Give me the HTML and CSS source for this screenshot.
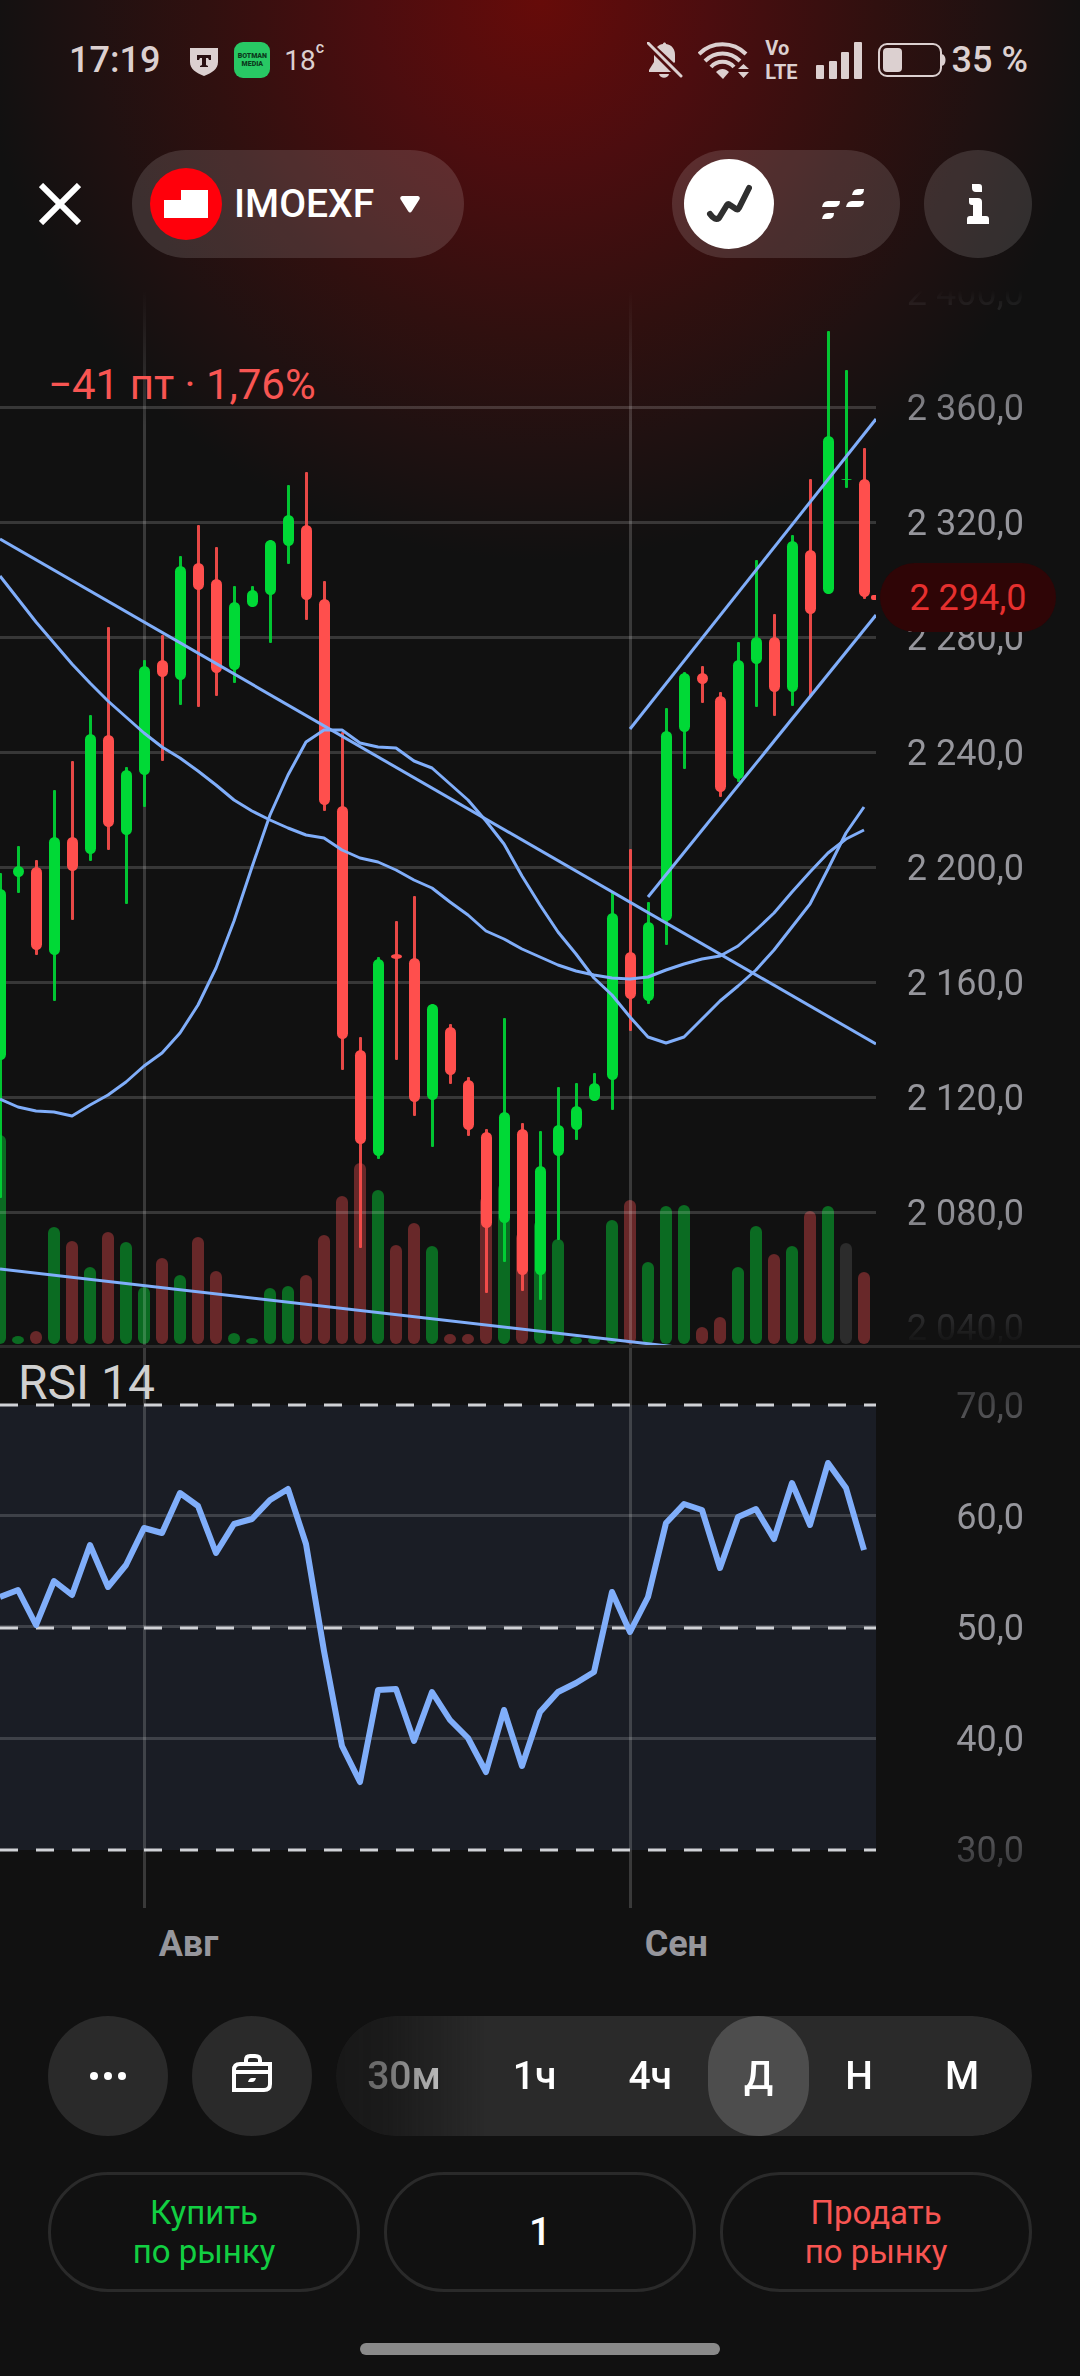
FILE: index.html
```html
<!DOCTYPE html>
<html lang="ru">
<head>
  <meta charset="UTF-8">
  <meta name="viewport" content="width=device-width, initial-scale=1">
  <title>IMOEXF</title>
  <link rel="stylesheet" href="styles.css">
</head>
<body>

<div class="statusbar">
  <span class="time">17:19</span>
  <svg class="shield" width="28" height="28" viewBox="0 0 28 28">
    <path fill="#dcd0d0" d="M0 0h28v14c0 7-6 11-14 14C6 25 0 21 0 14z"/>
    <path fill="#2a1012" d="M7 7h14v5h-2l-1-2h-2v7l2 1v1h-8v-1l2-1v-7h-2l-1 2H7z"/>
  </svg>
  <span class="app-badge"><span>BOTMAN</span><span>MEDIA</span></span>
  <span class="temp">18<sup>c</sup></span>

  <div class="status-icons">
    <svg width="36" height="36" viewBox="0 0 36 36" fill="#dcd0d0">
      <path d="M10 5c2-2 4-3 6-3 0-2 3-2 3 0 6 1 9 5 9 11v7l-1 1zM7 13v7l-5 8v2h22z"/>
      <path d="M12 32h10c-1 5-9 5-10 0z"/>
      <path d="M1 1l33 33" stroke="#dcd0d0" stroke-width="3" stroke-linecap="round"/>
    </svg>
    <svg class="wifi" width="51" height="37" viewBox="0 0 51 37" fill="none" stroke="#dcd0d0" stroke-width="4">
      <path d="M1 12c13-13 34-13 47 0M7 19c10-10 25-10 35 0M13 25c6-7 17-7 23 0"/>
      <path d="M18 30c4-4 9-4 13 0l-6 7z" fill="#dcd0d0" stroke="none"/>
      <path d="M40 27h11l-5.500-5zM40 30h11l-5.500 6z" fill="#dcd0d0" stroke="none"/>
    </svg>
    <span class="volte"><span>Vo</span><span>LTE</span></span>
    <svg class="signal" width="46" height="37" viewBox="0 0 46 37" fill="#dcd0d0">
      <rect x="0" y="23" width="8" height="14" rx="1"/>
      <rect x="13" y="19" width="8" height="18" rx="1"/>
      <rect x="25" y="10" width="8" height="27" rx="1"/>
      <rect x="38" y="0" width="8" height="37" rx="1"/>
    </svg>
    <svg class="battery" width="68" height="36" viewBox="0 0 68 36">
      <rect x="1" y="2" width="62" height="32" rx="8" fill="none" stroke="#dcd0d0" stroke-width="2"/>
      <rect x="5" y="6" width="19" height="24" rx="4" fill="#dcd0d0"/>
      <path d="M63 12c6 0 6 12 0 12z" fill="#dcd0d0"/>
    </svg>
    <span class="percent">35 %</span>
  </div>
</div>

<header>
  <button class="close" aria-label="Закрыть">
    <svg width="42" height="42" viewBox="0 0 42 42" stroke="#fff" stroke-width="6"><path d="M2 2l38 38M40 2L2 40"/></svg>
  </button>
  <button class="ticker">
    <svg width="72" height="72" viewBox="0 0 72 72">
      <circle cx="36" cy="36" r="36" fill="#ff000b"/>
      <path d="M14 32h17V22h27v28H14z" fill="#fff"/>
    </svg>
    <span>IMOEXF</span>
    <svg class="caret" width="20" height="17" viewBox="0 0 20 17"><path fill="#fff" d="M2 0h16q3 1 1 4l-7 11q-2 3-4 0L1 4q-2-3 1-4z"/></svg>
  </button>

  <div class="view-toggle">
    <button class="active" aria-label="График">
      <svg width="46" height="40" viewBox="0 0 46 40" fill="none" stroke="#2f2f2f" stroke-width="6" stroke-linejoin="round" stroke-linecap="round"><path d="M4 30q5 7 9 4l8-13q1-2 3 0l6 4q2 1 3-1L43 4"/></svg>
    </button>
    <button aria-label="Стакан">
      <svg width="42" height="31" viewBox="0 0 42 31" fill="#fff">
        <path d="M30 6q1-6 6-6h6q0 6-6 6zM24 18q1-6 6-6h12q0 6-6 6zM0 18q1-6 6-6h12q0 6-6 6zM0 30q1-6 6-6h6q0 6-6 6z"/>
      </svg>
    </button>
  </div>
  <button class="info" aria-label="Информация">
    <svg width="22" height="40" viewBox="0 0 22 40" fill="#fff">
      <path d="M5 0h7q3 0 3 3v5H9q-4 0-4-4zM2 14h9q4 0 4 4v14h4q3 0 3 3v5H0v-5q0-3 3-3h3V21H5q-3 0-3-3z"/>
    </svg>
  </button>
</header>

<main>
  <section class="pane price-pane">
    <div class="plot">
      <p class="change">−41 пт · 1,76%</p>
      <svg id="price" viewBox="0 290 876 1055" preserveAspectRatio="xMaxYMid slice"></svg>
    </div>
    <div class="axis">
      <ul>
        <li>2 400,0</li>
        <li>2 360,0</li>
        <li>2 320,0</li>
        <li>2 280,0</li>
        <li>2 240,0</li>
        <li>2 200,0</li>
        <li>2 160,0</li>
        <li>2 120,0</li>
        <li>2 080,0</li>
        <li>2 040,0</li>
      </ul>
    </div>
    <span class="last-price">2 294,0</span>
  </section>

  <section class="pane rsi-pane">
    <div class="plot">
      <p class="rsi-title">RSI 14</p>
      <svg id="rsi" viewBox="0 1348 876 560" preserveAspectRatio="xMaxYMid slice"></svg>
    </div>
    <div class="axis">
      <ul>
        <li>70,0</li>
        <li>60,0</li>
        <li>50,0</li>
        <li>40,0</li>
        <li>30,0</li>
      </ul>
    </div>
  </section>

  <div class="months">
    <span></span><span>Авг</span><span>Сен</span>
  </div>
</main>

<div class="toolbar">
  <button class="round" aria-label="Ещё">
    <svg width="36" height="8" viewBox="0 0 36 8" fill="#fff"><circle cx="4" cy="4" r="4"/><circle cx="18" cy="4" r="4"/><circle cx="32" cy="4" r="4"/></svg>
  </button>
  <button class="round" aria-label="Портфель">
    <svg class="case" width="40" height="38" viewBox="0 0 40 38" fill="none" stroke="#fff" stroke-width="4">
      <path d="M2 36V16q0-6 6-6h30v20q0 6-6 6zM14 10V6q0-4 4-4h5q5 0 5 4v4M2 18h36"/>
      <path d="M16 28q1-4 4-4h4q-1 4-4 4z" fill="#fff" stroke="none"/>
    </svg>
  </button>
  <div class="periods">
    <button>30м</button>
    <button>1ч</button>
    <button>4ч</button>
    <button class="active">Д</button>
    <button>Н</button>
    <button>М</button>
  </div>
</div>

<form class="order">
  <button type="button" class="buy">Купить<br>по рынку</button>
  <input type="text" value="1" aria-label="Количество">
  <button type="button" class="sell">Продать<br>по рынку</button>
</form>

<div class="home-bar"></div>

<script>
  const STEP = 18;
  const BOTTOM = 1344;

  // цвет, максимум, верх тела, низ тела, минимум, верх объёма
  const candles = [
    ['g',873,889,1060,1198,1135], ['g',846,866,877,893,1336], ['r',860,867,950,955,1331],
    ['g',790,837,955,1001,1227], ['r',761,837,871,920,1241], ['g',715,734,854,861,1267],
    ['r',627,735,827,850,1232], ['g',767,770,835,904,1242], ['g',660,666,775,807,1287],
    ['r',635,660,677,761,1258], ['g',556,566,680,705,1275], ['r',525,563,590,707,1237],
    ['r',547,579,673,696,1271], ['g',586,602,670,683,1333], ['g',586,590,607,607,1338],
    ['g',540,540,595,643,1288], ['g',485,515,546,564,1286], ['r',472,525,600,620,1275],
    ['r',581,599,805,811,1235], ['r',732,806,1039,1070,1196], ['r',1037,1050,1144,1248,1163],
    ['g',957,959,1156,1159,1190], ['r',921,954,959,1060,1245], ['r',896,958,1102,1116,1223],
    ['g',1004,1004,1100,1147,1246], ['r',1024,1027,1075,1084,1334], ['r',1077,1080,1130,1136,1334],
    ['r',1129,1132,1228,1293,1196], ['g',1018,1112,1223,1262,1183], ['r',1123,1129,1275,1291,1232],
    ['g',1131,1166,1275,1300,1220], ['g',1087,1125,1156,1240,1239], ['g',1083,1106,1130,1140,1337],
    ['g',1073,1083,1101,1101,1337], ['g',891,913,1080,1110,1220], ['r',849,952,999,1031,1200],
    ['g',902,922,1001,1004,1262], ['g',708,731,921,945,1206], ['g',672,673,732,769,1205],
    ['r',666,673,684,703,1327], ['r',692,696,792,797,1317], ['g',642,660,779,782,1267],
    ['g',560,637,664,707,1226], ['r',614,637,692,716,1254], ['g',535,541,692,706,1246],
    ['r',479,550,614,697,1211], ['g',331,436,594,594,1206], ['n',370,479,480,488,1243],
    ['r',448,479,597,599,1272]
  ];

  const maLong = [576,599,622,643,664,683,701,717,733,747,758,771,785,800,811,820,828,835,838,850,
    858,862,870,880,888,902,915,931,939,949,957,965,971,975,978,979,977,970,964,959,956,946,930,
    913,892,872,853,839,830];
  const maShort = [1099,1107,1111,1112,1116,1105,1095,1082,1066,1053,1033,1005,968,921,867,815,775,
    742,730,730,743,747,748,761,768,784,800,821,844,876,905,932,954,978,995,1017,1037,1043,1037,
    1019,1001,986,970,950,927,904,869,833,807];
  const rsi = [1597,1590,1625,1581,1595,1545,1587,1565,1528,1533,1493,1506,1553,1524,1519,1500,1489,
    1544,1651,1746,1782,1690,1689,1741,1692,1720,1738,1772,1710,1766,1712,1692,1683,1672,1592,1632,
    1597,1523,1504,1510,1568,1517,1509,1539,1483,1525,1463,1488,1550];

  const body = { g:'#00d936', r:'#ff4f4d', n:'#00d936' };
  const volume = { g:'#0b6b22', r:'#682829', n:'#2c2c2c' };

  function rect(x, y, w, h, fill, extra='') {
    return `<rect x="${x}" y="${y}" width="${w}" height="${h}" fill="${fill}" ${extra}/>`;
  }

  function line(values, width) {
    const points = values.map((y,i)=>`${i*STEP},${y}`).join(' ');
    return `<polyline points="${points}" fill="none" stroke="#80aefa" stroke-width="${width}" stroke-linejoin="round"/>`;
  }

  function trend(x1, y1, x2, y2) {
    return `<line x1="${x1}" y1="${y1}" x2="${x2}" y2="${y2}" stroke="#80aefa" stroke-width="3"/>`;
  }

  function drawPrice() {
    let out = `<defs><linearGradient id="fade" x1="0" y1="0" x2="0" y2="1">
      <stop offset="0" stop-color="#fff" stop-opacity="0"/>
      <stop offset="0.13" stop-color="#fff" stop-opacity="0.17"/></linearGradient></defs>`;

    candles.forEach((c,i)=>{
      out += rect(i*STEP-6, c[5], 12, BOTTOM-c[5], volume[c[0]], 'rx="6"');
    });

    for(let y=406; y<1300; y+=115) out += rect(0, y, 876, 3, '#fff', 'opacity=".16"');
    out += rect(143, 290, 3, 1055, 'url(#fade)') + rect(629, 290, 3, 1055, 'url(#fade)');

    candles.forEach((c,i)=>{
      const [color, high, top, bottom, low] = c;
      out += rect(i*STEP-1, high, 3, low-high, body[color], 'rx="1" opacity=".9"');
      out += rect(i*STEP-5, top, 11, bottom-top, body[color], 'rx="5.5"');
    });
    out += rect(871, 595, 12, 5, '#ff4f4d', 'rx="2"');

    out += trend(0, 539, 876, 1044) + trend(0, 1269, 876, 1370);
    out += trend(630, 729, 876, 419) + trend(648, 897, 876, 615);
    out += line(maLong, 3) + line(maShort, 3);
    document.getElementById('price').innerHTML = out;
  }

  function drawRsi() {
    let out = rect(0, 1405, 876, 445, '#1a1d25');
    [1514, 1625, 1737].forEach(y=>out += rect(0, y, 876, 3, '#fff', 'opacity=".16"'));
    out += rect(143, 1348, 3, 560, '#fff', 'opacity=".17"') + rect(629, 1348, 3, 560, '#fff', 'opacity=".17"');
    [1405, 1628, 1850].forEach(y=>{
      out += `<line x1="0" y1="${y}" x2="876" y2="${y}" stroke="#d0d2d6" stroke-width="3" stroke-dasharray="18"/>`;
    });
    out += line(rsi, 6);
    document.getElementById('rsi').innerHTML = out;
  }

  drawPrice();
  drawRsi();
</script>

</body>
</html>
```
FILE: styles.css
```css
* { box-sizing: border-box; }
body {
  margin: 0;
  min-height: 100vh;
  font-family: Roboto, "Noto Sans", sans-serif;
  color: #fff;
  background: #111 radial-gradient(560px 560px at 50% 0, #660b09 0, #4c0d0f 30%, #30100f 60%, #201111 80%, #111 100%) no-repeat;
}
button, input { font: inherit; color: inherit; border: none; background: none; padding: 0; margin: 0; cursor: pointer; }
svg { display: block; flex: none; }
p, ul { margin: 0; padding: 0; list-style: none; }

.statusbar { display: flex; align-items: center; height: 120px; padding: 0 52px 0 69px; color: #dcd0d0; }
.time, .percent { font-size: 36px; font-weight: 500; }
.shield { margin: 4px 0 0 30px; }
.app-badge {
  display: flex; flex-direction: column; align-items: center; justify-content: center;
  width: 36px; height: 36px; margin-left: 16px; border-radius: 9px;
  background: #28c864; color: #0b3a1c; font-size: 7px; line-height: 8px; font-weight: 900;
}
.temp { margin-left: 14px; font-size: 28px; display: flex; align-items: center; }
.temp sup { font-size: 16px; line-height: 16px; margin-bottom: 24px; font-weight: 500; }
.status-icons { display: flex; align-items: center; margin-left: auto; }
.wifi { margin-left: 15px; }
.volte { display: flex; flex-direction: column; margin-left: 16px; font-size: 20px; line-height: 24px; font-weight: 700; }
.signal { margin-left: 18px; }
.battery { margin: 0 6px 0 16px; }

header { display: flex; align-items: center; height: 108px; margin: 30px 48px 32px 24px; }
.close { width: 72px; height: 72px; display: flex; align-items: center; justify-content: center; }
.ticker, .view-toggle, .info { display: flex; align-items: center; height: 108px; border-radius: 54px; background: rgba(255, 255, 255, .13); }
.ticker { margin-left: 36px; padding: 0 44px 0 18px; font-size: 39px; font-weight: 500; gap: 12px; }
.caret { margin-left: 14px; }
.view-toggle { margin-left: auto; padding: 0 12px; gap: 24px; }
.view-toggle button { display: flex; align-items: center; justify-content: center; width: 90px; height: 90px; border-radius: 50%; }
.view-toggle .active { background: #fff; }
.info { width: 108px; margin-left: 24px; justify-content: center; }

.pane { display: grid; grid-template-columns: minmax(0, 1fr) 204px; position: relative; }
.plot { position: relative; }
.plot svg { width: 100%; height: 100%; }
.price-pane { height: 1058px; border-bottom: 3px solid #2c2c2c; }
.rsi-pane { height: 560px; }
.change { position: absolute; left: 48px; top: 70px; font-size: 42px; line-height: 50px; color: #f85552; }
.rsi-title { position: absolute; left: 18px; top: 7px; font-size: 48px; line-height: 56px; color: #d0d0d0; }

.axis {
  overflow: hidden;
  font-size: 36px;
  color: #96969c;
  text-align: right;
  -webkit-mask-image: linear-gradient(transparent, #000 140px, #000 calc(100% - 140px), transparent);
  mask-image: linear-gradient(transparent, #000 140px, #000 calc(100% - 140px), transparent);
}
.axis li { padding-right: 56px; }
.price-pane ul { margin-top: -54px; }
.price-pane li { height: 115px; line-height: 115px; }
.rsi-pane ul { margin-top: 2px; }
.rsi-pane li { height: 111px; line-height: 112px; }
.last-price {
  position: absolute; right: 24px; top: 273px; width: 176px; height: 69px;
  border-radius: 35px; background: #2f0506; color: #e6302f;
  font-size: 36px; line-height: 70px; text-align: center;
}

.months { display: grid; grid-template-columns: 13.3% 45% 1fr; height: 70px; line-height: 72px; font-size: 36px; font-weight: 700; color: #96969c; }
.months span { padding-left: 15px; }

.toolbar { display: flex; gap: 24px; margin: 38px 48px 36px; }
.round { display: flex; align-items: center; justify-content: center; flex: none; width: 120px; height: 120px; border-radius: 50%; background: #2a2a2a; }
.case { margin-bottom: 6px; }
.periods {
  display: flex; flex: 1; min-width: 0; justify-content: flex-end; overflow: hidden;
  padding-right: 17px; height: 120px; border-radius: 60px; background: #2a2a2a;
  -webkit-mask-image: linear-gradient(to right, rgba(0, 0, 0, .3), rgba(0, 0, 0, .4) 50px, #000 150px);
  mask-image: linear-gradient(to right, rgba(0, 0, 0, .3), rgba(0, 0, 0, .4) 50px, #000 150px);
}
.periods button { flex: none; padding: 0 36px; height: 120px; border-radius: 60px; font-size: 39px; font-weight: 500; }
.periods .active { background: #4d4d4d; }

.order { display: grid; grid-template-columns: repeat(3, minmax(0, 1fr)); gap: 24px; margin: 0 48px; }
.order button, .order input { height: 120px; border: 3px solid #2a2a2a; border-radius: 60px; text-align: center; font-size: 33px; line-height: 39px; }
.order input { width: 100%; font-size: 39px; font-weight: 500; }
.order .buy { color: #12cf42; }
.order .sell { color: #f85552; }

.home-bar { width: 33.33%; height: 12px; margin: 51px auto 0; border-radius: 6px; background: #8a8a8a; }
```
